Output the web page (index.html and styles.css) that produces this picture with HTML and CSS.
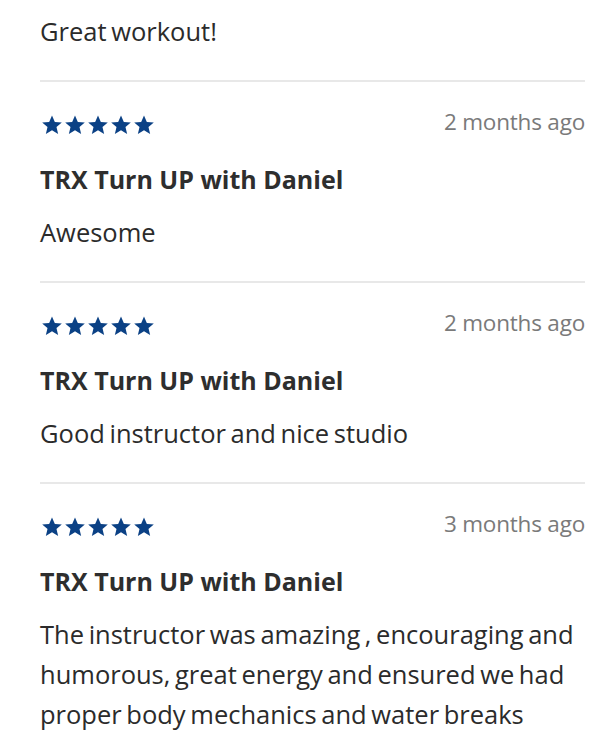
FILE: index.html
```html
<!DOCTYPE html>
<html>
<head>
<meta charset="utf-8">
<link rel="stylesheet" href="styles.css">
</head>
<body>
<div class="list">
  <div class="review first">
    <p class="body">Great workout!</p>
  </div>
  <div class="review">
    <div class="head">
      <div class="stars">
        <svg viewBox="0 0 24 24"><path d="M12 1.5l3.1 7.1 7.6.7-5.8 5 1.8 7.5L12 17.8l-6.7 4 1.8-7.5-5.8-5 7.6-.7z"/></svg>
        <svg viewBox="0 0 24 24"><path d="M12 1.5l3.1 7.1 7.6.7-5.8 5 1.8 7.5L12 17.8l-6.7 4 1.8-7.5-5.8-5 7.6-.7z"/></svg>
        <svg viewBox="0 0 24 24"><path d="M12 1.5l3.1 7.1 7.6.7-5.8 5 1.8 7.5L12 17.8l-6.7 4 1.8-7.5-5.8-5 7.6-.7z"/></svg>
        <svg viewBox="0 0 24 24"><path d="M12 1.5l3.1 7.1 7.6.7-5.8 5 1.8 7.5L12 17.8l-6.7 4 1.8-7.5-5.8-5 7.6-.7z"/></svg>
        <svg viewBox="0 0 24 24"><path d="M12 1.5l3.1 7.1 7.6.7-5.8 5 1.8 7.5L12 17.8l-6.7 4 1.8-7.5-5.8-5 7.6-.7z"/></svg>
      </div>
      <span class="date">2 months ago</span>
    </div>
    <h3 class="title">TRX Turn UP with Daniel</h3>
    <p class="body">Awesome</p>
  </div>
  <div class="review">
    <div class="head">
      <div class="stars">
        <svg viewBox="0 0 24 24"><path d="M12 1.5l3.1 7.1 7.6.7-5.8 5 1.8 7.5L12 17.8l-6.7 4 1.8-7.5-5.8-5 7.6-.7z"/></svg>
        <svg viewBox="0 0 24 24"><path d="M12 1.5l3.1 7.1 7.6.7-5.8 5 1.8 7.5L12 17.8l-6.7 4 1.8-7.5-5.8-5 7.6-.7z"/></svg>
        <svg viewBox="0 0 24 24"><path d="M12 1.5l3.1 7.1 7.6.7-5.8 5 1.8 7.5L12 17.8l-6.7 4 1.8-7.5-5.8-5 7.6-.7z"/></svg>
        <svg viewBox="0 0 24 24"><path d="M12 1.5l3.1 7.1 7.6.7-5.8 5 1.8 7.5L12 17.8l-6.7 4 1.8-7.5-5.8-5 7.6-.7z"/></svg>
        <svg viewBox="0 0 24 24"><path d="M12 1.5l3.1 7.1 7.6.7-5.8 5 1.8 7.5L12 17.8l-6.7 4 1.8-7.5-5.8-5 7.6-.7z"/></svg>
      </div>
      <span class="date">2 months ago</span>
    </div>
    <h3 class="title">TRX Turn UP with Daniel</h3>
    <p class="body">Good instructor and nice studio</p>
  </div>
  <div class="review">
    <div class="head">
      <div class="stars">
        <svg viewBox="0 0 24 24"><path d="M12 1.5l3.1 7.1 7.6.7-5.8 5 1.8 7.5L12 17.8l-6.7 4 1.8-7.5-5.8-5 7.6-.7z"/></svg>
        <svg viewBox="0 0 24 24"><path d="M12 1.5l3.1 7.1 7.6.7-5.8 5 1.8 7.5L12 17.8l-6.7 4 1.8-7.5-5.8-5 7.6-.7z"/></svg>
        <svg viewBox="0 0 24 24"><path d="M12 1.5l3.1 7.1 7.6.7-5.8 5 1.8 7.5L12 17.8l-6.7 4 1.8-7.5-5.8-5 7.6-.7z"/></svg>
        <svg viewBox="0 0 24 24"><path d="M12 1.5l3.1 7.1 7.6.7-5.8 5 1.8 7.5L12 17.8l-6.7 4 1.8-7.5-5.8-5 7.6-.7z"/></svg>
        <svg viewBox="0 0 24 24"><path d="M12 1.5l3.1 7.1 7.6.7-5.8 5 1.8 7.5L12 17.8l-6.7 4 1.8-7.5-5.8-5 7.6-.7z"/></svg>
      </div>
      <span class="date">3 months ago</span>
    </div>
    <h3 class="title">TRX Turn UP with Daniel</h3>
    <p class="body">The instructor was amazing , encouraging and humorous, great energy and ensured we had proper body mechanics and water breaks</p>
  </div>
</div>
</body>
</html>
```
FILE: styles.css
```css
html, body {
  margin: 0;
  padding: 0;
  background: #fff;
}
body {
  font-family: "Open Sans", "Noto Sans", sans-serif;
  color: #2b2b2b;
  overflow: hidden;
  height: 750px;
}
.list {
  padding: 11px 15px 0 40px;
}
.review {
  border-top: 2px solid #e8e8e8;
  padding: 28px 0 29px;
}
.review.first {
  border-top: none;
  padding-top: 0;
}
.head {
  display: flex;
  justify-content: space-between;
  align-items: center;
  height: 30px;
}
.stars {
  display: flex;
  gap: 1px;
  margin-left: 1px;
}
.stars svg {
  width: 22px;
  height: 22px;
  fill: #0b4185;
}
.date {
  font-size: 22.5px;
  color: #7a7a7a;
  line-height: 30px;
  letter-spacing: -0.2px;
  margin-bottom: 7px;
}
.title {
  margin: 19px 0 0;
  font-size: 25px;
  font-weight: 700;
  line-height: 40px;
  color: #2e2e2e;
}
.body {
  margin: 13px 0 0;
  font-size: 25.5px;
  line-height: 40px;
  word-spacing: -2px;
}
.review.first .body {
  margin-top: 0;
}
```
